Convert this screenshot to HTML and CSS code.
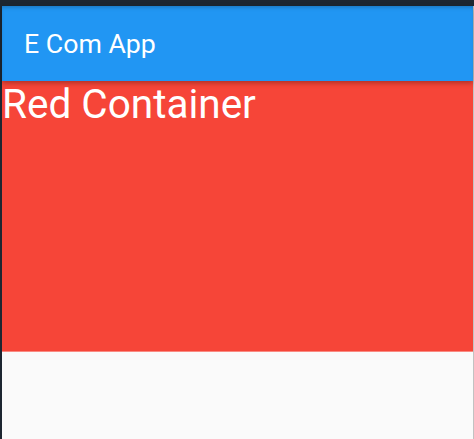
FILE: index.html
```html
<!DOCTYPE html>
<html>
<head>
<meta charset="utf-8">
<link rel="stylesheet" href="styles.css">
</head>
<body>
<div class="frame">
  <div class="screen">
    <header class="appbar">
      <h1 class="title">E Com App</h1>
    </header>
    <main class="content">
      <div class="red-box">Red Container</div>
    </main>
  </div>
</div>
</body>
</html>
```

FILE: styles.css
```css
html, body {
  margin: 0;
  padding: 0;
  height: 100%;
}
body {
  background: #1d2631;
  font-family: Roboto, "Noto Sans", sans-serif;
}
.frame {
  height: 100%;
  box-sizing: border-box;
  padding: 6px 0 0 2px;
  display: flex;
}
.screen {
  flex: 1;
  display: flex;
  flex-direction: column;
  background: #fafafa;
  border-right: 1px solid #c2c2c2;
}
.appbar {
  height: 75px;
  flex: none;
  background: #2196f3;
  display: flex;
  align-items: center;
  padding-left: 22px;
  box-shadow: 0 2px 5px rgba(0,0,0,0.3), inset 0 3px 4px -2px rgba(0,0,0,0.25);
  position: relative;
  z-index: 1;
}
.title {
  margin: 0;
  font-size: 26.7px;
  font-weight: 400;
  color: #ffffff;
  letter-spacing: 0;
}
.content {
  flex: 1;
}
.red-box {
  height: 270px;
  background: #f64538;
  color: #ffffff;
  font-size: 40.5px;
  line-height: 47px;
  border-bottom: 1px solid #f98a82;
}
```
